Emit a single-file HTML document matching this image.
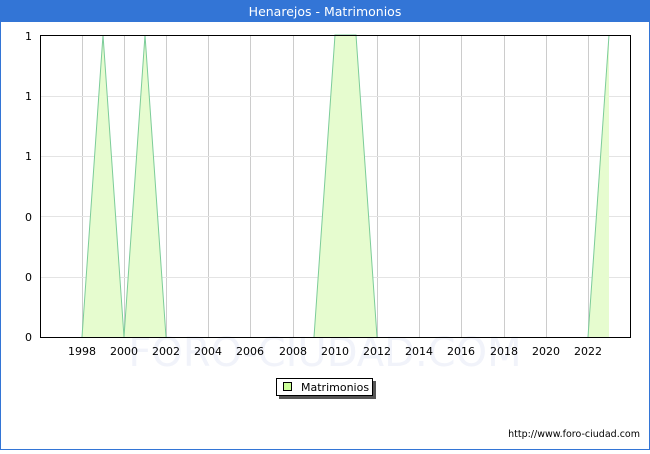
<!DOCTYPE html>
<html><head><meta charset="utf-8"><style>
body{margin:0;width:650px;height:450px;overflow:hidden;background:#fff;font-family:"DejaVu Sans","Liberation Sans",sans-serif;}
</style></head><body>
<svg width="650" height="450" xmlns="http://www.w3.org/2000/svg" font-family="DejaVu Sans, Liberation Sans, sans-serif">
<rect x="0" y="0" width="650" height="450" fill="#3375d6"/>
<rect x="1" y="22" width="648" height="427" fill="#fff"/>
<text x="325" y="16" fill="#fff" font-size="12.5" text-anchor="middle">Henarejos - Matrimonios</text>
<text x="325" y="366" fill="#f1f3fa" font-size="40" text-anchor="middle">FORO-CIUDAD.COM</text>
<g stroke="#ccc" stroke-width="1">
<line x1="82.5" y1="35" x2="82.5" y2="337"/><line x1="124.5" y1="35" x2="124.5" y2="337"/><line x1="166.5" y1="35" x2="166.5" y2="337"/><line x1="208.5" y1="35" x2="208.5" y2="337"/><line x1="250.5" y1="35" x2="250.5" y2="337"/><line x1="293.5" y1="35" x2="293.5" y2="337"/><line x1="335.5" y1="35" x2="335.5" y2="337"/><line x1="377.5" y1="35" x2="377.5" y2="337"/><line x1="419.5" y1="35" x2="419.5" y2="337"/><line x1="461.5" y1="35" x2="461.5" y2="337"/><line x1="504.5" y1="35" x2="504.5" y2="337"/><line x1="546.5" y1="35" x2="546.5" y2="337"/><line x1="588.5" y1="35" x2="588.5" y2="337"/>
</g>
<g stroke="#e4e4e4"><line x1="40" y1="96.5" x2="630" y2="96.5"/><line x1="40" y1="156.5" x2="630" y2="156.5"/><line x1="40" y1="216.5" x2="630" y2="216.5"/><line x1="40" y1="277.5" x2="630" y2="277.5"/></g>
<g fill="#e6fccf" stroke="none">
<polygon points="82,337 103,35 124,337 145,35 166,337"/>
<polygon points="314,337 335,35 356,35 377,337"/>
<polygon points="588,337 609,35 609,337"/>
</g>
<g fill="none" stroke="#7ccc99" stroke-width="1">
<polyline points="82,337 103,35 124,337 145,35 166,337"/>
<polyline points="314,337 335,35 356,35 377,337"/>
<polyline points="588,337 609,35"/>
</g>
<rect x="40.5" y="35.5" width="590" height="302" fill="none" stroke="#000"/>
<g font-size="11" fill="#000" text-anchor="end">
<text x="32" y="40">1</text><text x="32" y="100">1</text><text x="32" y="160">1</text><text x="32" y="221">0</text><text x="32" y="281">0</text><text x="32" y="341">0</text>
</g>
<g font-size="11" fill="#000" text-anchor="middle">
<text x="82" y="355">1998</text><text x="124" y="355">2000</text><text x="166" y="355">2002</text><text x="208" y="355">2004</text><text x="250" y="355">2006</text><text x="293" y="355">2008</text><text x="335" y="355">2010</text><text x="377" y="355">2012</text><text x="419" y="355">2014</text><text x="461" y="355">2016</text><text x="504" y="355">2018</text><text x="546" y="355">2020</text><text x="588" y="355">2022</text>
</g>
<rect x="279" y="381" width="97" height="18" fill="#555"/>
<rect x="276.5" y="378.5" width="96" height="17" fill="#fff" stroke="#000"/>
<rect x="283.5" y="382.5" width="8" height="8" fill="#ccff99" stroke="#000"/>
<text x="301" y="391" font-size="11">Matrimonios</text>
<text x="640" y="437" font-size="9.5" text-anchor="end">http://www.foro-ciudad.com</text>
</svg>
</body></html>
